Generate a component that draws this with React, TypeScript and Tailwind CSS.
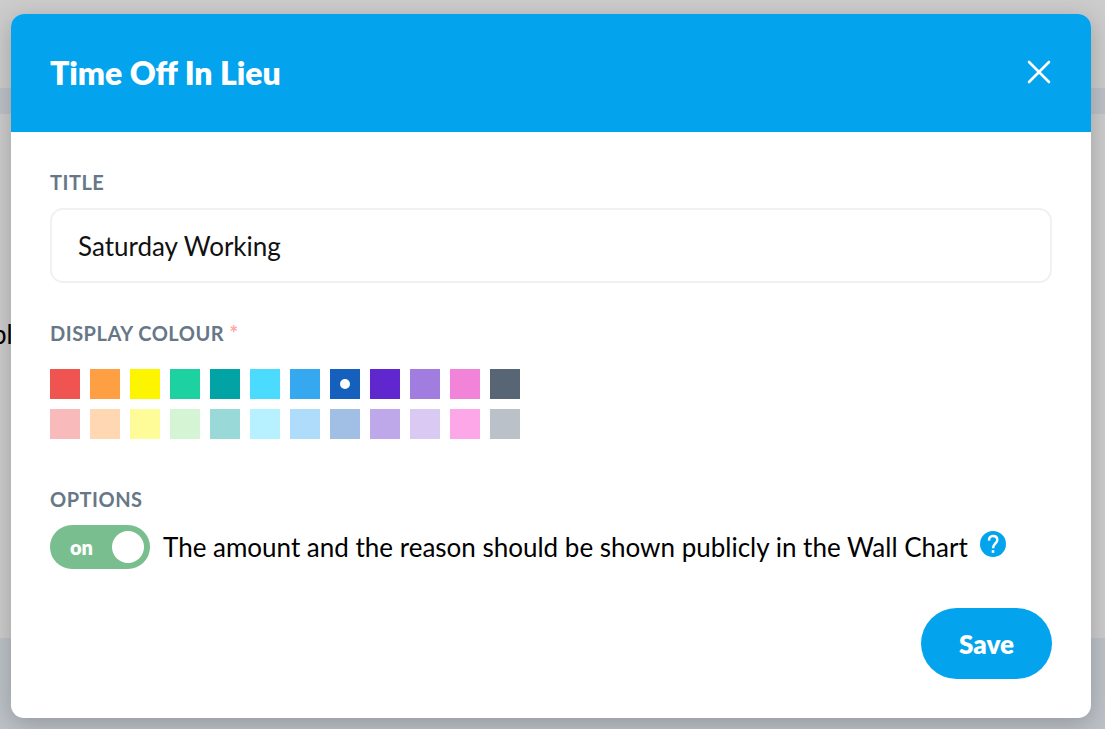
import { useState } from "react";

const swatches = [
  { name: "Red", className: "bg-[#f05451]" },
  { name: "Orange", className: "bg-[#ff9f43]" },
  { name: "Yellow", className: "bg-[#fdf500]" },
  { name: "Green", className: "bg-[#1dd1a1]" },
  { name: "Teal", className: "bg-[#01a3a4]" },
  { name: "Cyan", className: "bg-[#4bdbff]" },
  { name: "Sky blue", className: "bg-[#35a8f0]" },
  { name: "Blue", className: "bg-[#1560bd]" },
  { name: "Indigo", className: "bg-[#5f27cd]" },
  { name: "Lavender", className: "bg-[#a17de0]" },
  { name: "Pink", className: "bg-[#f183d9]" },
  { name: "Slate", className: "bg-[#576574]" },
  { name: "Light red", className: "bg-[#f9babb]" },
  { name: "Light orange", className: "bg-[#ffd8b3]" },
  { name: "Light yellow", className: "bg-[#fefb99]" },
  { name: "Light green", className: "bg-[#d4f4d4]" },
  { name: "Light teal", className: "bg-[#99dad9]" },
  { name: "Light cyan", className: "bg-[#b7f0ff]" },
  { name: "Light sky blue", className: "bg-[#aedcfa]" },
  { name: "Light blue", className: "bg-[#a1bfe5]" },
  { name: "Light indigo", className: "bg-[#bfa8ea]" },
  { name: "Light lavender", className: "bg-[#d9c9f3]" },
  { name: "Light pink", className: "bg-[#fda7e8]" },
  { name: "Light slate", className: "bg-[#bbc1c8]" },
];

const labelClass = "block text-[20px] leading-6 font-bold tracking-[0.5px] text-[#667787] uppercase";

export default function App() {
  const [title, setTitle] = useState("Saturday Working");
  const [colour, setColour] = useState("Blue");
  const [isPublic, setIsPublic] = useState(true);

  return (
    <div className="relative flex min-h-screen flex-col bg-[#bdc2c8] font-['Lato',sans-serif] text-[26px] leading-8 text-black">
      <div className="h-[88px] bg-[#cccccc]" />
      <div className="mt-[26px] h-[524px] overflow-hidden bg-[#cccccc] pt-[204px]">
        <p className="-ml-2">pl</p>
      </div>

      <div className="absolute inset-0 px-[11px] pt-[14px] pr-[14px]">
        <div
          role="dialog"
          aria-labelledby="dialog-title"
          className="overflow-hidden rounded-[13px] bg-white shadow-[0_6px_24px_rgba(0,0,0,0.22)]"
        >
          <header className="flex h-[118px] items-center justify-between bg-[#03a4ed] px-[39px] text-white">
            <h1 id="dialog-title" className="text-[32px] leading-10 font-extrabold">
              Time Off In Lieu
            </h1>
            <button type="button" aria-label="Close" className="cursor-pointer">
              <svg width="26" height="26" viewBox="0 0 26 26" fill="none" stroke="currentColor" strokeWidth="2.6" strokeLinecap="round">
                <path d="M3 2 23 22M23 2 3 22" />
              </svg>
            </button>
          </header>

          <form className="px-[39px] pt-[38px] pb-[39px]" onSubmit={(e) => e.preventDefault()}>
            <label htmlFor="title" className={labelClass}>
              Title
            </label>
            <input
              id="title"
              type="text"
              value={title}
              onChange={(e) => setTitle(e.target.value)}
              className="mt-[14px] block h-[75px] w-full rounded-[13px] border-2 border-[#f1f1f1] bg-white px-[26px] text-[26px] text-[#111111] outline-none"
            />

            <fieldset className="mt-[38px]">
              <legend className={labelClass}>
                Display Colour <span className="font-black text-[#ffa6a6]">*</span>
              </legend>
              <div className="mt-[24px] grid grid-cols-[repeat(12,30px)] gap-[10px]">
                {swatches.map((s) => (
                  <label key={s.name} className={`flex size-[30px] cursor-pointer items-center justify-center ${s.className}`}>
                    <input
                      type="radio"
                      name="colour"
                      aria-label={s.name}
                      checked={colour === s.name}
                      onChange={() => setColour(s.name)}
                      className="size-[10px] appearance-none rounded-full checked:bg-white"
                    />
                  </label>
                ))}
              </div>
            </fieldset>

            <fieldset className="mt-[48px]">
              <legend className={labelClass}>Options</legend>
              <div className="mt-[14px] flex items-center">
                <label className="flex cursor-pointer items-center gap-[13px]">
                  <input
                    type="checkbox"
                    role="switch"
                    checked={isPublic}
                    onChange={(e) => setIsPublic(e.target.checked)}
                    className="peer sr-only"
                  />
                  <span
                    aria-hidden="true"
                    className="flex h-11 w-[100px] shrink-0 flex-row-reverse items-center justify-between rounded-full bg-[#aab2ba] pr-5 pl-[6px] text-[20px] leading-6 font-extrabold text-white peer-checked:flex-row peer-checked:bg-[#78be8e] peer-checked:pr-[6px] peer-checked:pl-5"
                  >
                    {isPublic ? "on" : "off"}
                    <span className="size-8 rounded-full bg-white" />
                  </span>
                  <span>The amount and the reason should be shown publicly in the Wall Chart</span>
                </label>
                <button type="button" aria-label="Help" className="mb-[6px] ml-3 shrink-0 cursor-pointer text-[#03a4ed]">
                  <svg width="26" height="26" viewBox="0 0 26 26" fill="none">
                    <circle cx="13" cy="13" r="13" fill="currentColor" />
                    <path d="M9.1 9.600C8.700 6.500 10.600 4.900 13 4.900C15.500 4.900 17.300 6.500 17.300 8.900C17.300 12.300 13 12.600 13 17.200" stroke="white" strokeWidth="2.500" />
                    <rect x="11.700" y="19.200" width="2.600" height="2.600" fill="white" />
                  </svg>
                </button>
              </div>
            </fieldset>

            <div className="mt-[39px] flex justify-end">
              <button type="submit" className="h-[71px] cursor-pointer rounded-full bg-[#03a4ed] px-[38px] text-[26px] font-extrabold text-white">
                Save
              </button>
            </div>
          </form>
        </div>
      </div>
    </div>
  );
}
